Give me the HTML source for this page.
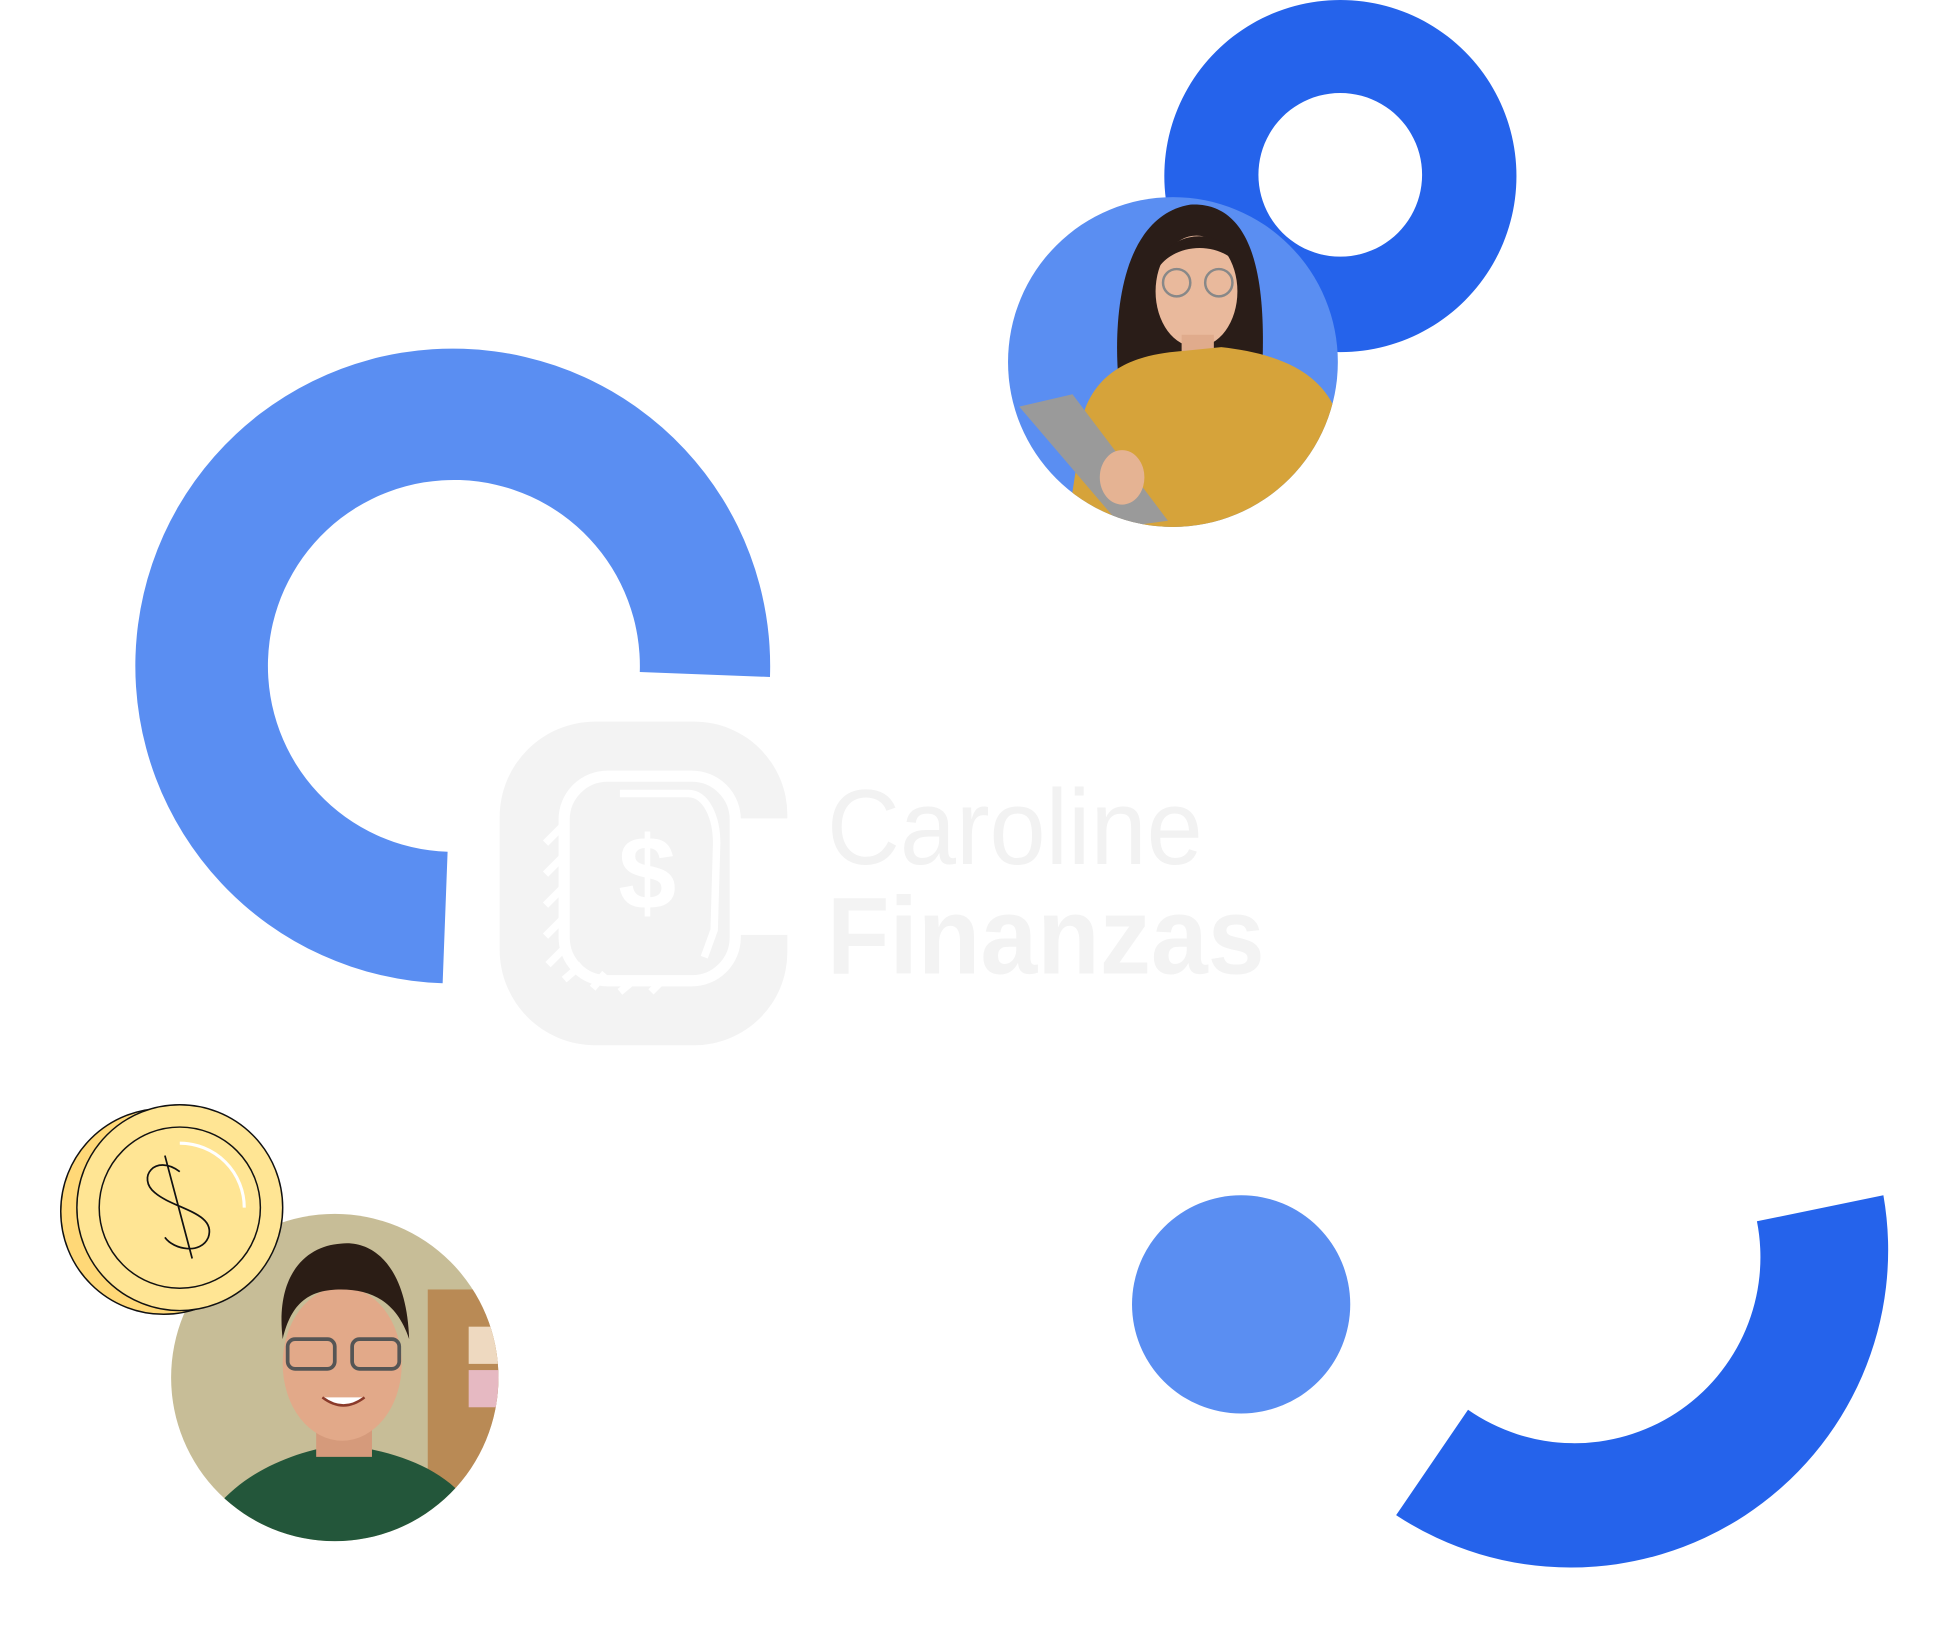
<!DOCTYPE html>
<html><head><meta charset="utf-8"><style>html,body{margin:0;padding:0;background:#fff;overflow:hidden}svg{display:block}</style></head>
<body>
<svg width="1943" height="1625" viewBox="0 0 1567 1310.6" preserveAspectRatio="xMinYMin meet" xmlns="http://www.w3.org/2000/svg">
<defs>
<clipPath id="cw"><circle cx="946" cy="292" r="133"/></clipPath>
<clipPath id="cm"><circle cx="270" cy="1111" r="132"/></clipPath>
</defs>
<path fill-rule="evenodd" fill="#2563EB" d="M1081 0a142 142 0 1 0 0.1 0zM1081 75a66 66 0 1 1 -0.1 0z"/>
<g clip-path="url(#cw)">
<rect x="800" y="150" width="300" height="300" fill="#5A8EF2"/>
<path d="M905 330 C895 270 900 175 960 165 C1020 162 1020 250 1018 300 L1000 320 Z" fill="#2a1d18"/>
<ellipse cx="965" cy="235" rx="33" ry="45" fill="#e9b99c"/>
<path d="M935 215 C940 185 990 180 1000 215 C985 195 950 195 935 215Z" fill="#2a1d18"/>
<circle cx="949" cy="228" r="11" fill="none" stroke="#888" stroke-width="2"/>
<circle cx="983" cy="228" r="11" fill="none" stroke="#888" stroke-width="2"/>
<rect x="953" y="270" width="26" height="20" fill="#e0ab8c"/>
<path d="M875 330 C890 290 930 285 955 283 L985 280 C1030 285 1070 300 1080 340 L1080 430 L860 430 Z" fill="#d6a33a"/>
<path d="M822 328 L865 318 L942 420 L905 425 Z" fill="#9a9a9a"/>
<ellipse cx="905" cy="385" rx="18" ry="22" fill="#e5b393"/>
</g>
<path fill="#5A8EF2" d="M621 546 A256 256 0 1 0 357 793 L361 687 A150 150 0 1 1 516 542 Z"/>
<path fill="#F3F3F3" d="M480 582 H560 A75 75 0 0 1 635 657 V660 H597 V754 H635 V768 A75 75 0 0 1 560 843 H480 A77 77 0 0 1 403 766 V659 A77 77 0 0 1 480 582 Z"/>
<rect x="455" y="626" width="138" height="165" rx="35" fill="none" stroke="#fff" stroke-width="9"/>
<path d="M500 640 H555 C570 640 578 660 578 680 L576 750 L568 772" fill="none" stroke="#fff" stroke-width="6"/>
<path d="M440 680 l14 -14 M440 705 l14 -14 M440 730 l14 -14 M440 755 l14 -14 M442 778 l16 -16 M455 790 l14 -12 M478 797 l10 -12 M500 800 l12 -10 M525 800 l10 -10" stroke="#fff" stroke-width="6"/>
<text x="522" y="733" text-anchor="middle" font-family="Liberation Sans, sans-serif" font-weight="700" font-size="84" fill="#fff">$</text>
<text x="667" y="697" font-family="Liberation Sans, sans-serif" font-size="86" fill="#f2f2f2" textLength="303" lengthAdjust="spacingAndGlyphs">Caroline</text>
<text x="667" y="785" font-family="Liberation Sans, sans-serif" font-weight="700" font-size="88" fill="#f3f3f3" textLength="353" lengthAdjust="spacingAndGlyphs">Finanzas</text>
<g clip-path="url(#cm)">
<rect x="130" y="975" width="280" height="280" fill="#c7bd97"/>
<rect x="345" y="1040" width="60" height="160" fill="#b98a55"/>
<rect x="378" y="1070" width="25" height="30" fill="#eed9c0"/>
<rect x="378" y="1105" width="25" height="30" fill="#e6b9c2"/>
<path d="M175 1215 C200 1185 240 1170 275 1165 C320 1170 360 1185 380 1215 L380 1250 L170 1250Z" fill="#23563a"/>
<rect x="255" y="1135" width="45" height="40" fill="#d59a7b"/>
<ellipse cx="276" cy="1100" rx="48" ry="62" fill="#e2a989"/>
<path d="M228 1080 C222 1030 245 1005 275 1003 C300 1000 328 1020 330 1080 C320 1050 300 1040 275 1040 C250 1040 235 1050 228 1080Z" fill="#2b1d15"/>
<rect x="232" y="1080" width="38" height="24" rx="6" fill="none" stroke="#555" stroke-width="3"/>
<rect x="284" y="1080" width="38" height="24" rx="6" fill="none" stroke="#555" stroke-width="3"/>
<path d="M260 1127 Q277 1140 294 1127" fill="#fff" stroke="#8a3a2a" stroke-width="2"/>
</g>
<circle cx="132" cy="977" r="83" fill="#FFD877" stroke="#111" stroke-width="1.2"/>
<circle cx="145" cy="974" r="83" fill="#FFE594" stroke="#111" stroke-width="1.2"/>
<circle cx="145" cy="974" r="65" fill="none" stroke="#111" stroke-width="1.2"/>
<path d="M145 922 A52 52 0 0 1 197 974" fill="none" stroke="#fff" stroke-width="2.5"/>
<path d="M145 945 C125 930 110 950 125 962 C140 975 175 978 168 998 C162 1012 140 1008 133 998 M133 932 L155 1015" fill="none" stroke="#111" stroke-width="1.4"/>
<circle cx="1001" cy="1052" r="88" fill="#5A8EF2"/>
<path fill="#2563EB" d="M1519 964 A256 256 0 0 1 1126 1222 L1184 1137 A150 150 0 0 0 1417 985 Z"/>
</svg>
</body></html>
